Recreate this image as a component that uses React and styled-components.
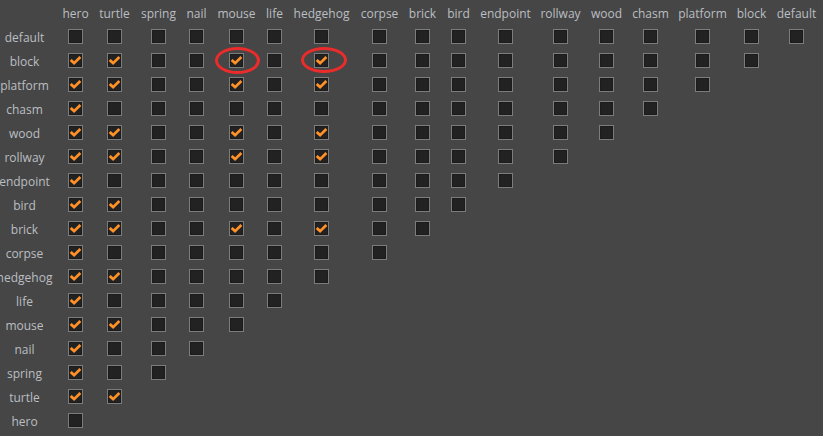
import React from "react";
import styled, { createGlobalStyle } from "styled-components";

const GlobalStyle = createGlobalStyle`
  html, body {
    margin: 0;
    padding: 0;
    background: #464646;
  }
  body {
    font-family: "Open Sans", "Noto Sans", sans-serif;
    font-size: 12px;
    color: #bbbec2;
    overflow: hidden;
  }
`;

const layers = [
  "hero", "turtle", "spring", "nail", "mouse", "life", "hedgehog", "corpse",
  "brick", "bird", "endpoint", "rollway", "wood", "chasm", "platform", "block", "default",
];

// distance from one checkbox column to the next
const tracks = [39, 44, 38, 40, 38, 47, 58, 43, 36, 47, 55, 46, 44, 52, 49, 45, 15];
const template = `68px ${tracks.map((t) => `${t}px`).join(" ")}`;

const checked = {
  block: ["hero", "turtle", "mouse", "hedgehog"],
  platform: ["hero", "turtle", "mouse", "hedgehog"],
  chasm: ["hero"],
  wood: ["hero", "turtle", "mouse", "hedgehog"],
  rollway: ["hero", "turtle", "mouse", "hedgehog"],
  endpoint: ["hero"],
  bird: ["hero", "turtle"],
  brick: ["hero", "turtle", "mouse", "hedgehog"],
  corpse: ["hero"],
  hedgehog: ["hero", "turtle"],
  life: ["hero"],
  mouse: ["hero", "turtle"],
  nail: ["hero"],
  spring: ["hero"],
  turtle: ["hero", "turtle"],
};

const Page = styled.div`
  position: relative;
  width: 823px;
  height: 436px;
  background: #464646;
`;

const Matrix = styled.div`
  display: flex;
  flex-direction: column;
`;

const GridRow = styled.div`
  display: grid;
  grid-template-columns: ${(p) => p.$template};
  height: ${(p) => p.$height}px;
`;

const HeaderLabel = styled.div`
  width: 15px;
  display: flex;
  justify-content: center;
  white-space: nowrap;
  line-height: 16px;
  padding-top: 6px;
`;

const RowLabel = styled.div`
  width: 49px;
  display: flex;
  justify-content: center;
  white-space: nowrap;
  line-height: 24px;
  padding-top: 2px;
`;

const Box = styled.div`
  box-sizing: border-box;
  width: 15px;
  height: 15px;
  margin-top: 5px;
  border: 1px solid #7c7c7c;
  background: #222222;
  box-shadow: inset 0 0 0 1px #1c1c1c;
  display: flex;
  align-items: center;
  justify-content: center;
`;

const Ring = styled.div`
  position: absolute;
  left: ${(p) => p.$x}px;
  top: ${(p) => p.$y}px;
  width: ${(p) => p.$w}px;
  height: ${(p) => p.$h}px;
  box-sizing: border-box;
  border: 3px solid #ec2b2b;
  border-radius: 50%;
  pointer-events: none;
`;

const Check = () => (
  <svg width="13" height="13" viewBox="0 0 13 13">
    <path
      d="M2.6 6.8 L5.1 9.1 L10.4 3.9"
      fill="none"
      stroke="#ff9128"
      strokeWidth="2.7"
      strokeLinecap="square"
      strokeLinejoin="miter"
    />
  </svg>
);

const Checkbox = ({ on }) => <Box>{on ? <Check /> : null}</Box>;

export default function App() {
  const rows = [...layers].reverse();
  return (
    <Page>
      <GlobalStyle />
      <Matrix>
        <GridRow $template={template} $height={24}>
          <div />
          {layers.map((l) => (
            <HeaderLabel key={l}>{l}</HeaderLabel>
          ))}
        </GridRow>
        {rows.map((row, r) => {
          const count = layers.length - r;
          const on = checked[row] || [];
          return (
            <GridRow key={row} $template={template} $height={24}>
              <RowLabel>{row}</RowLabel>
              {layers.slice(0, count).map((col) => (
                <Checkbox key={col} on={on.includes(col)} />
              ))}
            </GridRow>
          );
        })}
      </Matrix>
      <Ring $x={215} $y={47} $w={45} $h={27} />
      <Ring $x={301} $y={47} $w={46} $h={26} />
    </Page>
  );
}
